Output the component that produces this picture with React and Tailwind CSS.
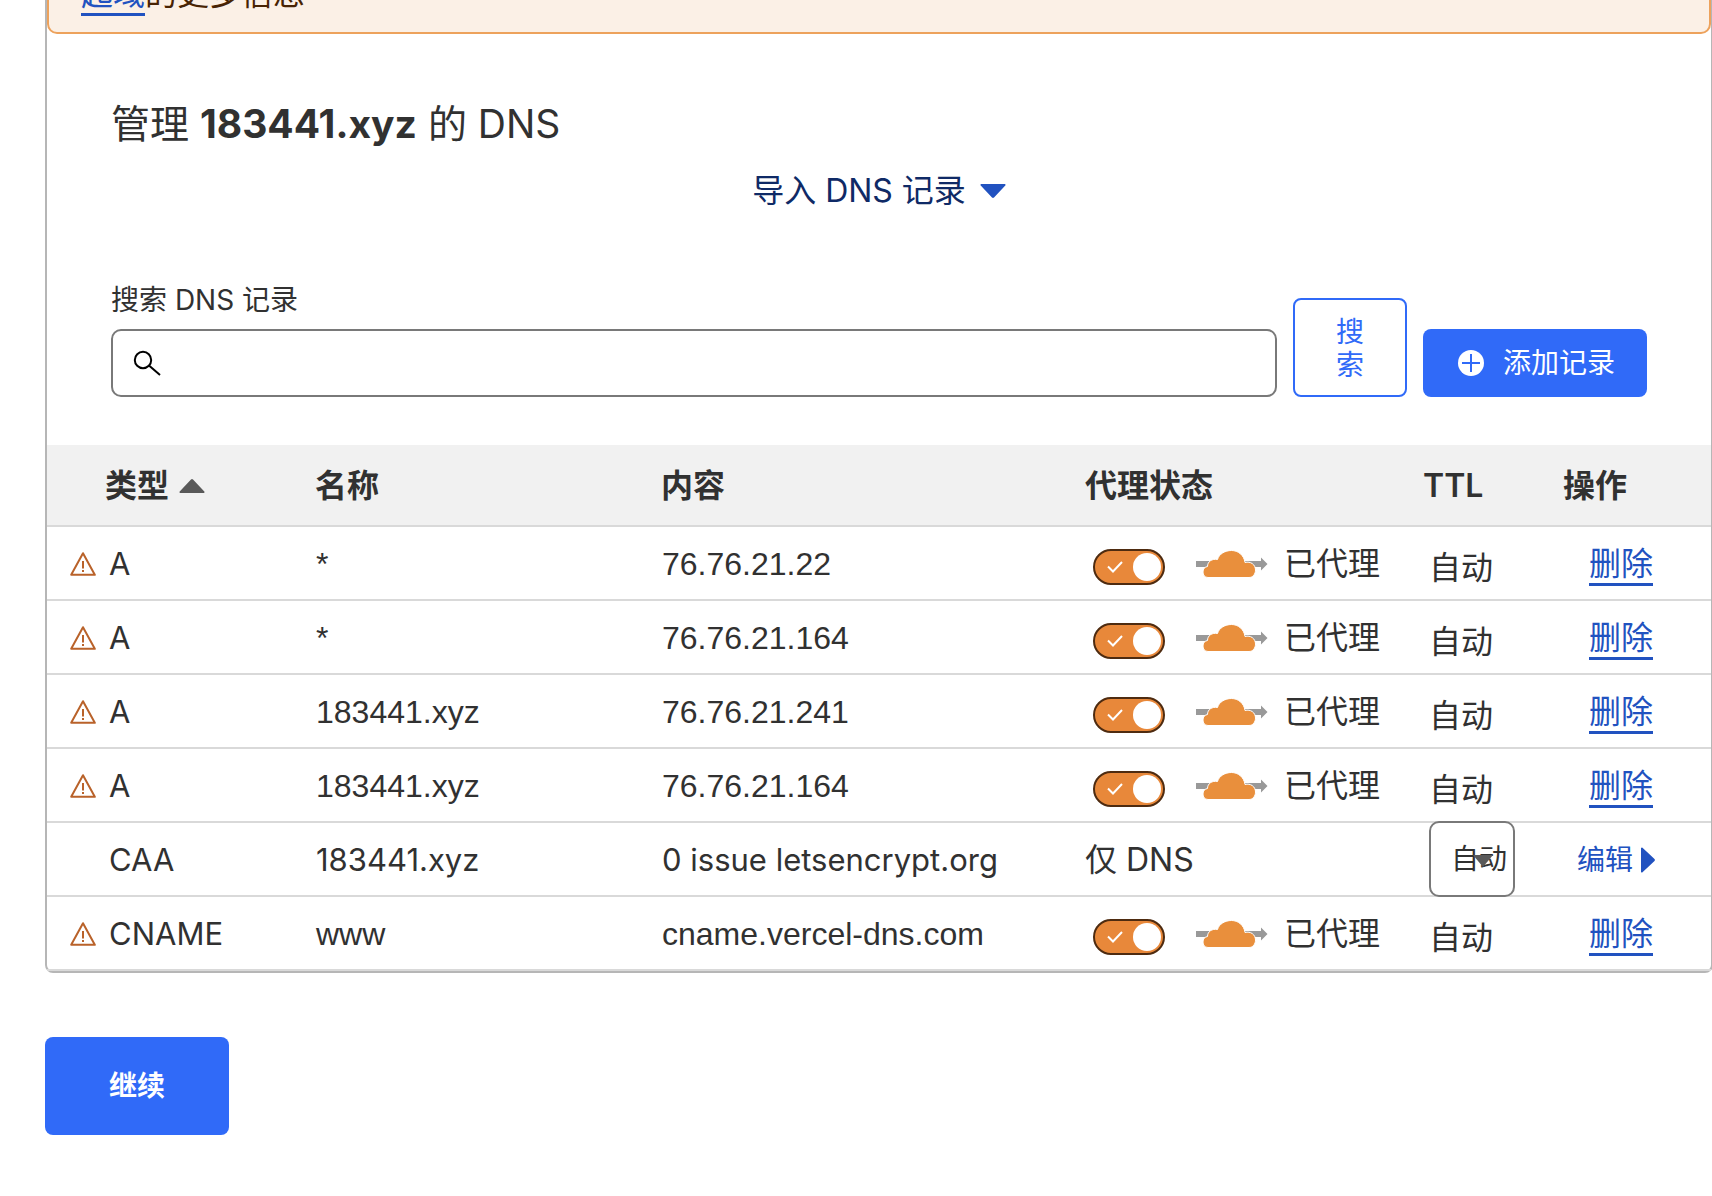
import React, { useState } from 'react';

const initialRecords = [
  { id: 1, type: 'A', name: '*', content: '76.76.21.22', proxied: true },
  { id: 2, type: 'A', name: '*', content: '76.76.21.164', proxied: true },
  { id: 3, type: 'A', name: '183441.xyz', content: '76.76.21.241', proxied: true },
  { id: 4, type: 'A', name: '183441.xyz', content: '76.76.21.164', proxied: true },
  { id: 5, type: 'CAA', name: '183441.xyz', content: '0 issue letsencrypt.org', dnsOnly: true },
  { id: 6, type: 'CNAME', name: 'www', content: 'cname.vercel-dns.com', proxied: true },
];

const WarningIcon = () => (
  <svg className="w-[26px] h-6 shrink-0" viewBox="0 0 26 24" fill="none" stroke="#b9622a" strokeWidth="2" aria-hidden="true">
    <path d="M13 1.2 L24.8 22.8 H1.2 Z" strokeLinejoin="round" />
    <path d="M13 9v7.5M13 18v2" />
  </svg>
);

const SearchIcon = () => (
  <svg className="w-7 h-[26px]" viewBox="0 0 28 26" fill="none" stroke="#000" strokeWidth="2" aria-hidden="true">
    <circle cx="10" cy="10" r="8.2" />
    <path d="M16 15.5 L27 25" />
  </svg>
);

const PlusCircleIcon = () => (
  <svg className="w-8 h-8" viewBox="0 0 32 32" aria-hidden="true">
    <circle cx="16" cy="16" r="13" fill="#fff" />
    <path d="M16 7v18M7 16h18" stroke="#306af8" strokeWidth="2" />
  </svg>
);

const CloudIcon = () => (
  <svg className="w-[72px] h-7 shrink-0" viewBox="0 0 72 28" aria-hidden="true">
    <path d="M0 11h65V7.500L71.500 14 65 20.500V17H0z" fill="#999" />
    <path
      d="M12 27.500c-3.500 0-5-2.700-5-5.500 0-3 1.500-5 4.500-5.500C11.500 11.500 16 8.500 21.500 9.500 23 4 29 .5 35.500.5S48 5 49 12.500c5.500-1.500 10.500 2 10.500 7.500 0 4-2.500 7.500-6.500 7.500z"
      fill="#e98f3c"
      stroke="#fff"
      strokeWidth="1"
    />
  </svg>
);

const ProxySwitch = ({ checked, onChange, label }) => (
  <label className="relative block mt-1.5 w-[72px] h-9 shrink-0">
    <input type="checkbox" className="peer sr-only" checked={checked} onChange={onChange} aria-label={label} />
    <span className="flex items-center w-full h-full rounded-full border-2 border-[#4e2b10] bg-gray-400 peer-checked:bg-[#e8883a]">
      <svg className="ml-3 w-4 h-3" viewBox="0 0 16 12" fill="none" stroke="#fff" strokeWidth="2" aria-hidden="true">
        <path d="M1 5.500 L6 10.500 L15 1" />
      </svg>
      <span className="ml-auto mr-0.5 w-7 h-7 rounded-full bg-white" />
    </span>
  </label>
);

const App = () => {
  const [records, setRecords] = useState(initialRecords);
  const [query, setQuery] = useState('');

  const toggleProxy = id =>
    setRecords(prev => prev.map(r => (r.id === id ? { ...r, proxied: !r.proxied } : r)));

  const removeRecord = id => setRecords(prev => prev.filter(r => r.id !== id));

  return (
    <div className="min-h-screen overflow-hidden bg-white text-[#313131] font-['Inter','Noto_Sans_CJK_SC',sans-serif] pb-15">
      <div className="ml-[45px] -mr-px border-2 border-t-0 border-[#b6b6b6] rounded-b-lg">
        <div className="-mt-[38px] pl-8 pt-2 pb-4 border-2 border-[#eda25c] rounded-[10px] bg-[#fbf0e6] text-[#482303] text-[32px] leading-11">
          <a href="#" className="text-[#2152c0] border-b-3 border-[#2152c0]">起域</a>的更多信息
        </div>

        <div className="px-16 pt-16 pb-12">
          <h2 className="text-[39px] leading-[51px]">
            管理 <strong className="font-bold">183441.xyz</strong> 的 DNS
          </h2>

          <div className="flex justify-center mt-5">
            <button className="flex items-center gap-3.5 text-[32px] leading-11 text-[#0f2a66]">
              导入 DNS 记录
              <svg className="w-[26px] h-3.5" viewBox="0 0 26 14" fill="#2152c0" aria-hidden="true">
                <path d="M1 0h24q1 .8.300 1.500L14 13.500q-1 .8-2 0L.7 1.500Q0 .8 1 0z" />
              </svg>
            </button>
          </div>

          <form className="flex items-end gap-4 mt-[66px]" onSubmit={e => e.preventDefault()}>
            <div className="grow">
              <label htmlFor="dns-search" className="block mb-2 text-[28px] leading-[42px]">搜索 DNS 记录</label>
              <div className="relative">
                <span className="absolute left-[22px] top-[21px]">
                  <SearchIcon />
                </span>
                <input
                  id="dns-search"
                  type="text"
                  value={query}
                  onChange={e => setQuery(e.target.value)}
                  className="block w-full h-17 pl-16 pr-4 text-[28px] border-2 border-[#797979] rounded-[10px]"
                />
              </div>
            </div>
            <button type="submit" className="w-min px-[41px] pt-4 pb-[13px] border-2 border-[#306af8] rounded-lg text-[28px] leading-[33px] text-[#306af8]">
              搜索
            </button>
            <button type="button" className="flex items-center gap-4 h-17 px-8 shrink-0 rounded-lg bg-[#306af8] text-[28px] text-white">
              <PlusCircleIcon />
              添加记录
            </button>
          </form>
        </div>

        <table className="w-full table-fixed border-separate border-spacing-0 text-[32px] leading-10 text-left">
          <thead>
            <tr className="h-[82px] bg-[#f1f1f1] whitespace-nowrap [&>th]:pt-0.5 [&>th]:border-b-2 [&>th]:border-[#d9d9d9]">
              <th className="w-[268px] pl-[58px] font-semibold">
                <span className="flex items-center gap-2.5">
                  类型
                  <svg className="w-[26px] h-3.5" viewBox="0 0 26 14" fill="#595959" aria-hidden="true">
                    <path d="M1 14h24q1-.8.300-1.500L14 .500q-1-.8-2 0L.7 12.500Q0 13.200 1 14z" />
                  </svg>
                </span>
              </th>
              <th className="w-[346px] font-semibold">名称</th>
              <th className="font-semibold">内容</th>
              <th className="w-[338px] font-semibold">代理状态</th>
              <th className="w-[140px] font-semibold">TTL</th>
              <th className="w-[148px] font-semibold">操作</th>
            </tr>
          </thead>
          <tbody>
            {records.map(record => (
              <tr key={record.id} className="h-[74px] [&>td]:pt-0.5 [&>td]:border-b-2 [&>td]:border-[#d9d9d9]">
                <td className="pl-[23px] text-[31px]">
                  <div className="flex items-center gap-[13px]">
                    {record.dnsOnly ? <span className="w-[26px]" /> : <WarningIcon />}
                    {record.type}
                  </div>
                </td>
                <td className={record.dnsOnly ? 'pl-px text-[31px]' : "pl-px font-['Liberation_Sans',sans-serif]"}>{record.name}</td>
                <td className={record.dnsOnly ? 'pl-px text-[31px]' : "pl-px font-['Liberation_Sans',sans-serif]"}>{record.content}</td>
                <td>
                  {record.dnsOnly ? (
                    '仅 DNS'
                  ) : (
                    <div className="flex items-center pl-2">
                      <ProxySwitch
                        checked={record.proxied}
                        onChange={() => toggleProxy(record.id)}
                        label={`${record.name} ${record.type}`}
                      />
                      <span className="flex items-center gap-4 ml-[31px]">
                        <CloudIcon />
                        已代理
                      </span>
                    </div>
                  )}
                </td>
                <td className="pl-1.5">
                  {record.dnsOnly ? (
                    <div className="relative -mt-1.5 -mb-1 w-[86px]">
                      <select aria-label="TTL" className="block w-full h-[76px] pl-5 appearance-none border-2 border-[#797979] rounded-[10px] bg-white text-[28px]">
                        <option>自动</option>
                      </select>
                      <svg className="absolute left-11 top-[34px] w-5 h-3 pointer-events-none" viewBox="0 0 20 12" fill="#595959" aria-hidden="true">
                        <path d="M0 0h20L10 12z" />
                      </svg>
                    </div>
                  ) : (
                    <div className="pt-2">自动</div>
                  )}
                </td>
                <td>
                  {record.dnsOnly ? (
                    <button className="flex items-center gap-2 ml-3.5 text-[28px] text-[#2152c0]">
                      编辑
                      <svg className="w-3.5 h-[26px]" viewBox="0 0 14 26" fill="#2152c0" aria-hidden="true">
                        <path d="M0 1q.8-1 1.500-.3L13.500 12q.8 1 0 2L1.500 25.300Q.8 26 0 25z" />
                      </svg>
                    </button>
                  ) : (
                    <a
                      href="#"
                      onClick={e => {
                        e.preventDefault();
                        removeRecord(record.id);
                      }}
                      className="ml-[26px] text-[#2152c0] border-b-3 border-[#2152c0]"
                    >
                      删除
                    </a>
                  )}
                </td>
              </tr>
            ))}
          </tbody>
        </table>
      </div>

      <button className="mt-16 ml-[45px] px-16 py-7 rounded-lg bg-[#306af8] text-[28px] leading-[42px] font-bold text-white">
        继续
      </button>
    </div>
  );
};

export default App;
